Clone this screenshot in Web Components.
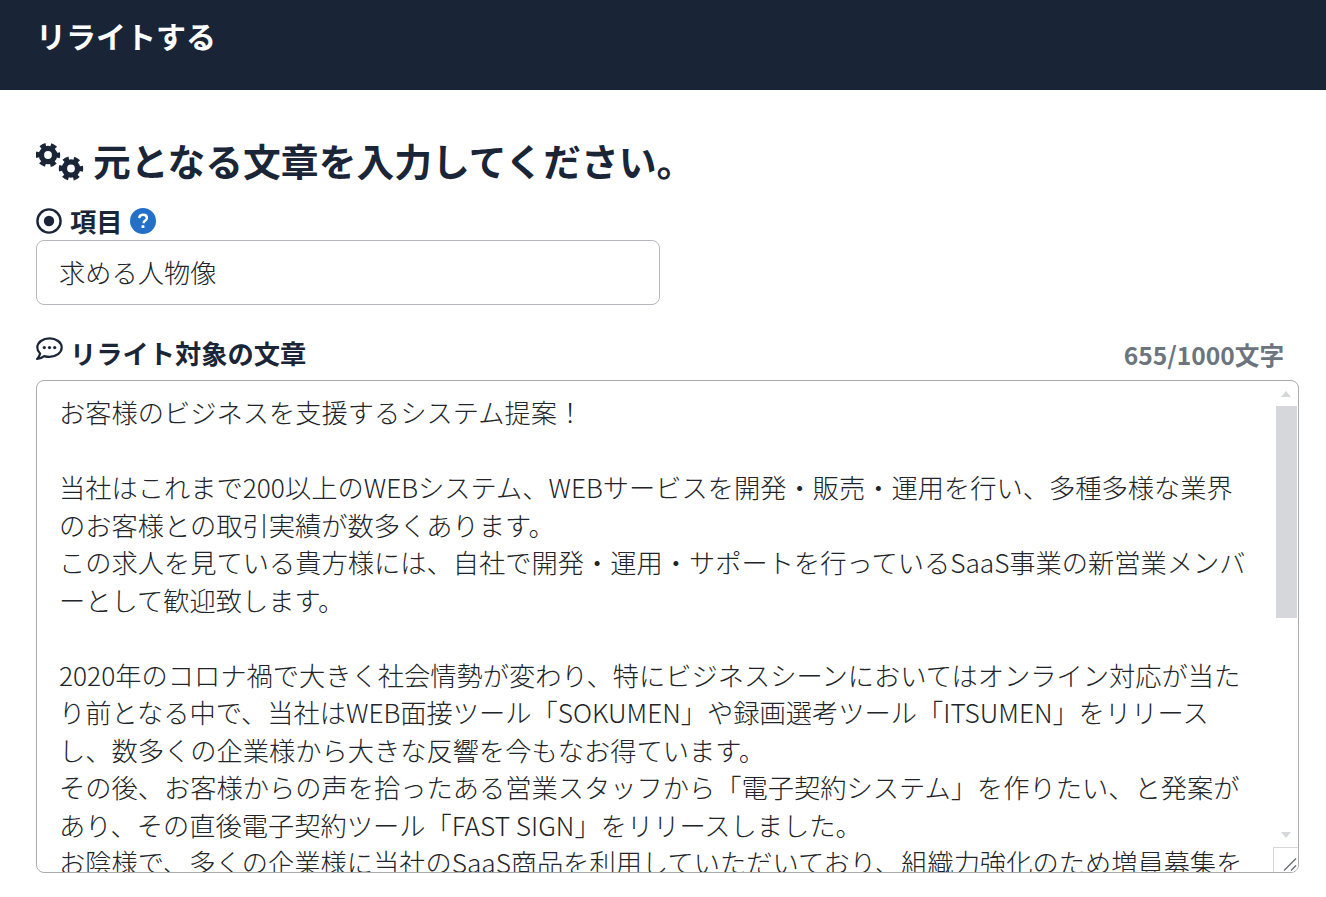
<!DOCTYPE html>
<html lang="ja">
<head>
<meta charset="utf-8">
<title>リライトする</title>
<style>
    html, body { margin: 0; height: 897px; overflow: hidden; background: #fff; }
    body { font-family: "Noto Sans CJK JP", "Noto Sans", sans-serif; color: #1a2638; }
    rewrite-form { display: block; }
</style>
</head>
<body>
<template id="gears-icon">
    <svg width="48" height="40" viewBox="0 0 48 40" fill="none" stroke="#1a2638" style="margin-top:4px">
        <circle cx="12" cy="14" r="6.6" stroke-width="5.4"/>
        <circle cx="12" cy="14" r="10.2" stroke-width="4" stroke-dasharray="5.700 4.980" stroke-dashoffset="2.850"/>
        <circle cx="35" cy="27.500" r="6.6" stroke-width="5.4"/>
        <circle cx="35" cy="27.500" r="10.2" stroke-width="4" stroke-dasharray="5.700 4.980" stroke-dashoffset="2.850"/>
    </svg>
</template>

<app-header>リライトする</app-header>
<rewrite-form></rewrite-form>

<script>
const ARTICLE = `お客様のビジネスを支援するシステム提案！

当社はこれまで200以上のWEBシステム、WEBサービスを開発・販売・運用を行い、多種多様な業界
のお客様との取引実績が数多くあります。
この求人を見ている貴方様には、自社で開発・運用・サポートを行っているSaaS事業の新営業メンバ
ーとして歓迎致します。

2020年のコロナ禍で大きく社会情勢が変わり、特にビジネスシーンにおいてはオンライン対応が当た
り前となる中で、当社はWEB面接ツール「SOKUMEN」や録画選考ツール「ITSUMEN」をリリース
し、数多くの企業様から大きな反響を今もなお得ています。
その後、お客様からの声を拾ったある営業スタッフから「電子契約システム」を作りたい、と発案が
あり、その直後電子契約ツール「FAST SIGN」をリリースしました。
お陰様で、多くの企業様に当社のSaaS商品を利用していただいており、組織力強化のため増員募集を`;

class AppHeader extends HTMLElement {
    constructor() {
        super();
        this.attachShadow({ mode: 'open' });
        this.shadowRoot.innerHTML = `
            <style>
                :host {
                    display: block;
                    height: 90px;
                    box-sizing: border-box;
                    padding: 13px 36px 0;
                    background: #192536;
                    color: #fff;
                    font-size: 30px;
                    font-weight: 700;
                    line-height: 44px;
                }
            </style>
            <slot></slot>
        `;
    }
}
customElements.define('app-header', AppHeader);

class FieldLabel extends HTMLElement {
    constructor() {
        super();
        this.attachShadow({ mode: 'open' });
        this.shadowRoot.innerHTML = `
            <style>
                :host {
                    display: flex;
                    align-items: center;
                    gap: 7px;
                    height: 38px;
                    font-size: 26.25px;
                    font-weight: 700;
                    color: #1a2638;
                    white-space: nowrap;
                }
                .icon { display: flex; width: 27px; justify-content: flex-start; }
            </style>
            <span class="icon"><slot name="icon"></slot></span>
            <slot></slot>
        `;
    }
}
customElements.define('field-label', FieldLabel);

class TextBox extends HTMLElement {
    constructor() {
        super();
        this.attachShadow({ mode: 'open' });
        this.shadowRoot.innerHTML = `
            <style>
                :host {
                    display: block;
                    width: 624px;
                    height: 65px;
                    box-sizing: border-box;
                    padding: 0 22px;
                    border: 1px solid #b5b8bc;
                    border-radius: 8px;
                    font-size: 26.25px;
                    line-height: 63px;
                    color: #212529;
                    font-weight: 300;
                }
            </style>
            <slot></slot>
        `;
    }
}
customElements.define('text-box', TextBox);

class ScrollArea extends HTMLElement {
    constructor() {
        super();
        this.attachShadow({ mode: 'open' });
        this.shadowRoot.innerHTML = `
            <style>
                :host {
                    display: block;
                    position: relative;
                    height: 493px;
                    box-sizing: border-box;
                    border: 1px solid #a9acb0;
                    border-radius: 8px;
                    overflow: hidden;
                }
                .text {
                    padding: 13px 22px 0;
                    font-size: 26.25px;
                    line-height: 37.5px;
                    color: #212529;
                    font-weight: 300;
                    white-space: pre;
                }
                .thumb {
                    position: absolute;
                    top: 25px;
                    right: 1px;
                    width: 21px;
                    height: 212px;
                    background: #d6d7db;
                }
                .arrow {
                    position: absolute;
                    right: 7px;
                    width: 0;
                    height: 0;
                    border-left: 5px solid transparent;
                    border-right: 5px solid transparent;
                }
                .up { top: 10px; border-bottom: 6px solid #d6d7db; }
                .down { bottom: 34px; border-top: 6px solid #d6d7db; }
                .grip {
                    position: absolute;
                    right: 0;
                    bottom: 0;
                    width: 24px;
                    height: 24px;
                    background: #fff;
                    border: solid #d6d7db;
                    border-width: 1px 0 0 1px;
                }
                .grip svg { position: absolute; right: 0; bottom: 0; display: block; }
            </style>
            <div class="text"><slot></slot></div>
            <div class="arrow up"></div>
            <div class="thumb"></div>
            <div class="arrow down"></div>
            <div class="grip">
                <svg width="16" height="16" viewBox="0 0 16 16" stroke="#6d6f72" stroke-width="1.4">
                    <path d="M2 14.5 14 2.5M9 14.5 14 9.5"/>
                </svg>
            </div>
        `;
    }
}
customElements.define('scroll-area', ScrollArea);

class RewriteForm extends HTMLElement {
    constructor() {
        super();
        this.attachShadow({ mode: 'open' });
        const gears = document.getElementById('gears-icon').innerHTML;
        this.shadowRoot.innerHTML = `
            <style>
                :host {
                    display: block;
                    padding: 46px 27px 0 36px;
                }
                h2 {
                    display: flex;
                    align-items: center;
                    gap: 9px;
                    margin: 0;
                    height: 46px;
                    font-size: 37.8px;
                    font-weight: 700;
                    color: #1a2638;
                    white-space: nowrap;
                }
                h2 svg { flex: none; }
                .first { margin-top: 20px; margin-bottom: 0; height: 38px; }
                .help { display: block; }
                .head {
                    display: flex;
                    justify-content: space-between;
                    align-items: flex-end;
                    margin-top: 29px;
                    margin-bottom: 8px;
                }
                .count {
                    padding-right: 15px;
                    font-size: 24.6px;
                    font-weight: 700;
                    line-height: 36px;
                    color: #6c757d;
                }
                svg { display: block; }
            </style>
            <h2>${gears}<span>元となる文章を入力してください。</span></h2>
            <field-label class="first">
                <svg slot="icon" width="26" height="26" viewBox="0 0 26 26">
                    <circle cx="13" cy="13" r="11.6" fill="none" stroke="#1a2638" stroke-width="2.4"/>
                    <circle cx="13" cy="13" r="5.2" fill="#1a2638"/>
                </svg>
                項目
                <svg class="help" width="26" height="26" viewBox="0 0 26 26">
                    <circle cx="13" cy="13" r="13" fill="#2470c9"/>
                    <path d="M9.2 10.2c.2-2.3 1.8-3.4 3.9-3.4s3.8 1.2 3.8 3.1c0 1.5-.9 2.2-1.9 2.9-.9.6-1.3 1-1.3 2v.4" fill="none" stroke="#fff" stroke-width="2.4"/>
                    <rect x="11.5" y="17.2" width="2.9" height="2.9" rx=".6" fill="#fff"/>
                </svg>
            </field-label>
            <text-box>求める人物像</text-box>
            <div class="head">
                <field-label>
                    <svg slot="icon" width="27" height="24" viewBox="0 0 27 24" style="margin-top:-8px">
                        <path d="M13.5 1.3C6.8 1.3 1.3 5.4 1.3 10.6c0 2.3 1 4.3 2.8 5.9-.3 1.9-1.3 3.6-3 5.4 2.8-.2 5.200-1.200 7.100-2.800 1.600.5 3.400.8 5.300.8 6.700 0 12.200-4.100 12.200-9.300S20.200 1.300 13.500 1.300Z" fill="none" stroke="#1a2638" stroke-width="2.2" stroke-linejoin="round"/>
                        <circle cx="8.300" cy="10.600" r="1.600" fill="#1a2638"/>
                        <circle cx="13.500" cy="10.600" r="1.600" fill="#1a2638"/>
                        <circle cx="18.700" cy="10.600" r="1.600" fill="#1a2638"/>
                    </svg>
                    リライト対象の文章
                </field-label>
                <span class="count">655/1000文字</span>
            </div>
            <scroll-area>${ARTICLE}</scroll-area>
        `;
    }
}
customElements.define('rewrite-form', RewriteForm);
</script>
</body>
</html>
